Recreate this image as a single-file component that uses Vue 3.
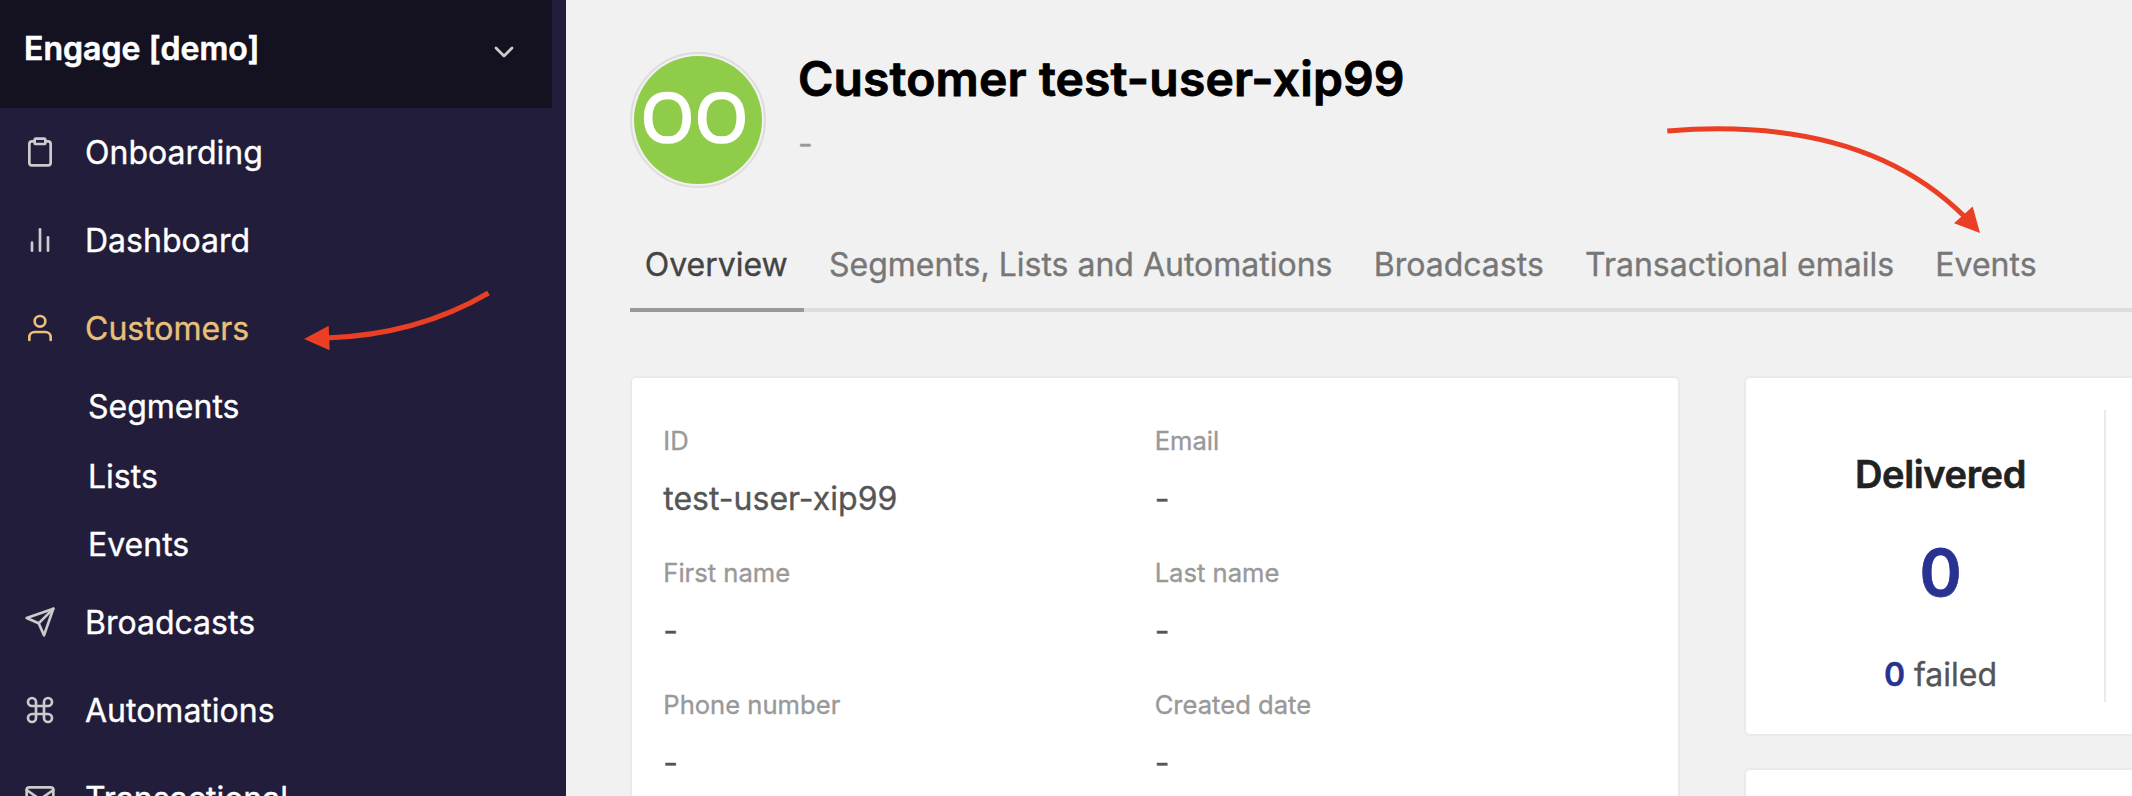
<script setup>
const items = [
  { label: 'Onboarding', icon: 'clipboard' },
  { label: 'Dashboard', icon: 'bars' },
  { label: 'Customers', icon: 'user', active: true, children: ['Segments', 'Lists', 'Events'] },
  { label: 'Broadcasts', icon: 'send' },
  { label: 'Automations', icon: 'command' },
  { label: 'Transactional', icon: 'mail' },
]
const icons = {
  clipboard: ['M16 4h2a2 2 0 0 1 2 2v14a2 2 0 0 1-2 2H6a2 2 0 0 1-2-2V6a2 2 0 0 1 2-2h2', 'M9 2h6a1 1 0 0 1 1 1v2a1 1 0 0 1-1 1H9a1 1 0 0 1-1-1V3a1 1 0 0 1 1-1z'],
  bars: ['M18 20V10', 'M12 20V4', 'M6 20v-6'],
  user: ['M20 21v-2a4 4 0 0 0-4-4H8a4 4 0 0 0-4 4v2', 'M16 7a4 4 0 1 1-8 0a4 4 0 1 1 8 0z'],
  send: ['M22 2L11 13', 'M22 2l-7 20-4-9-9-4 20-7z'],
  command: ['M18 3a3 3 0 0 0-3 3v12a3 3 0 1 0 3-3H6a3 3 0 1 0 3 3V6a3 3 0 1 0-3 3h12a3 3 0 0 0 0-6z'],
  mail: ['M4 4h16c1.1 0 2 .9 2 2v12c0 1.1-.9 2-2 2H4c-1.1 0-2-.9-2-2V6c0-1.1.9-2 2-2z', 'M22 6l-10 7L2 6'],
}
const tabs = ['Overview', 'Segments, Lists and Automations', 'Broadcasts', 'Transactional emails', 'Events']
const fields = [
  ['ID', 'test-user-xip99'], ['Email', '-'],
  ['First name', '-'], ['Last name', '-'],
  ['Phone number', '-'], ['Created date', '-'],
]
</script>

<template>
  <div class="app">
    <aside class="sidebar">
      <header class="workspace">
        <span>Engage [demo]</span>
        <svg class="icon chevron" viewBox="0 0 24 24"><path d="M6 9l6 6 6-6" /></svg>
      </header>
      <nav>
        <template v-for="item in items" :key="item.label">
          <a class="item" :class="{ active: item.active }">
            <svg class="icon" viewBox="0 0 24 24"><path v-for="d in icons[item.icon]" :key="d" :d="d" /></svg>
            <span>{{ item.label }}</span>
          </a>
          <div v-if="item.children" class="children">
            <a v-for="c in item.children" :key="c">{{ c }}</a>
          </div>
        </template>
      </nav>
    </aside>
    <main class="main">
      <section class="profile">
        <div class="avatar"><span>OO</span></div>
        <div>
          <h1>Customer test-user-xip99</h1>
          <p>-</p>
        </div>
      </section>
      <div class="tabs">
        <a v-for="(t, i) in tabs" :key="t" :class="{ current: i === 0 }">{{ t }}</a>
      </div>
      <div class="cards">
        <section class="card details">
          <div v-for="f in fields" :key="f[0]" class="field">
            <label>{{ f[0] }}</label>
            <span>{{ f[1] }}</span>
          </div>
        </section>
        <div class="side">
          <section class="card stats">
            <div class="stat">
              <h2>Delivered</h2>
              <strong>0</strong>
              <p><b>0</b> failed</p>
            </div>
          </section>
          <section class="card next"></section>
        </div>
      </div>
    </main>
    <svg class="arrows" viewBox="0 0 2132 796">
      <path class="line" d="M488.5 293Q417 335 326 338" />
      <path class="head" d="M304 339L328.7 325.7L329.7 350.3Z" />
      <path class="line" d="M1667.3 131Q1863 115 1965 217" />
      <path class="head" d="M1980 233L1972.7 206.5L1954 223.3Z" />
    </svg>
  </div>
</template>

<style>
body { margin: 0; overflow: hidden; }
</style>

<style scoped>
.app { position: relative; display: flex; width: 2132px; height: 796px; overflow: hidden; background: #f1f1f1; font-family: Inter, sans-serif; font-size: 32px; -webkit-text-stroke-width: 0.35px; }
.sidebar { flex: 0 0 566px; background: #221d3a; color: #fff; }
.workspace { box-sizing: border-box; width: 552px; height: 108px; padding: 0 32px 12px 24px; display: flex; align-items: center; justify-content: space-between; background: #141121; font-weight: 600; letter-spacing: 0.05px; -webkit-text-stroke-width: 0.6px; }
.icon { flex: none; width: 32px; height: 32px; fill: none; stroke: #ccc; stroke-width: 2; stroke-linecap: round; stroke-linejoin: round; }
.chevron { margin-top: 8px; }
.item { display: flex; align-items: center; height: 88px; padding-left: 24px; gap: 29px; }
.item.active { color: #e9c078; }
.item.active .icon { stroke: #e9c078; }
.children { box-sizing: border-box; display: flex; flex-direction: column; height: 206px; padding: 0 0 8px 88px; }
.children a { box-sizing: border-box; height: 69px; line-height: 69px; }
.children a:nth-child(2) { padding-top: 1px; }
.main { flex: 1; min-width: 0; padding: 52px 0 0 64px; }
.profile { display: flex; gap: 32px; height: 136px; }
.avatar { box-sizing: border-box; width: 136px; height: 136px; border: 2px solid #ddd; padding: 2px; border-radius: 50%; background: #8fcc4a content-box; display: flex; align-items: center; justify-content: center; color: #fff; font: 500 68px "Open Sans", sans-serif; letter-spacing: 1px; -webkit-text-stroke-width: 2.6px; }
.avatar span { margin: 0 6px 9px 0; }
h1 { margin: 0; font-size: 48px; line-height: 54px; font-weight: 600; letter-spacing: 0.15px; color: #000; -webkit-text-stroke-width: 0.9px; }
.profile p { margin: 18px 0 0; line-height: 40px; color: #999; }
.tabs { box-sizing: border-box; display: flex; height: 88px; margin-top: 36px; border-bottom: 4px solid #ddd; color: #777; white-space: nowrap; }
.tabs a { box-sizing: border-box; height: 88px; padding: 21px 16px 0 14.7px; margin-right: 10.6px; line-height: 40px; }
.tabs .current { color: #444; border-bottom: 4px solid #999; }
.cards { display: flex; gap: 64px; margin-top: 64px; }
.card { box-sizing: border-box; border: 2px solid #eaeaea; border-radius: 6px; background: #fff; }
.details { flex: 0 0 1050px; height: 500px; padding: 41px 32px 0 31.3px; display: grid; grid-template-columns: 1fr 1fr; grid-auto-rows: 132px; align-content: start; }
.field { display: flex; flex-direction: column; color: #555; }
.field label { font-size: 25.6px; line-height: 44px; color: #999; }
.field span { line-height: 72px; }
.side { flex: 0 0 800px; display: flex; flex-direction: column; gap: 32px; }
.stats { height: 360px; padding: 32px; }
.stat { box-sizing: border-box; width: 328px; height: 292px; padding-right: 1px; border-right: 2px solid #eaeaea; text-align: center; color: #555; }
h2 { margin: 0; padding-top: 40px; font-size: 38px; line-height: 48px; font-weight: 600; letter-spacing: -0.35px; color: #222; -webkit-text-stroke-width: 0.6px; }
.stat strong { display: block; margin-top: 35px; font-size: 64px; line-height: 80px; font-weight: 600; color: #283291; -webkit-text-stroke-width: 0.8px; }
.stat p { margin: 42px 0 0; line-height: 40px; }
.stat b { font-weight: 600; color: #283291; }
.next { height: 100px; }
.arrows { position: absolute; inset: 0; width: 2132px; height: 796px; }
.line { fill: none; stroke: #ea3f24; stroke-width: 5; }
.head { fill: #ea3f24; }
</style>
